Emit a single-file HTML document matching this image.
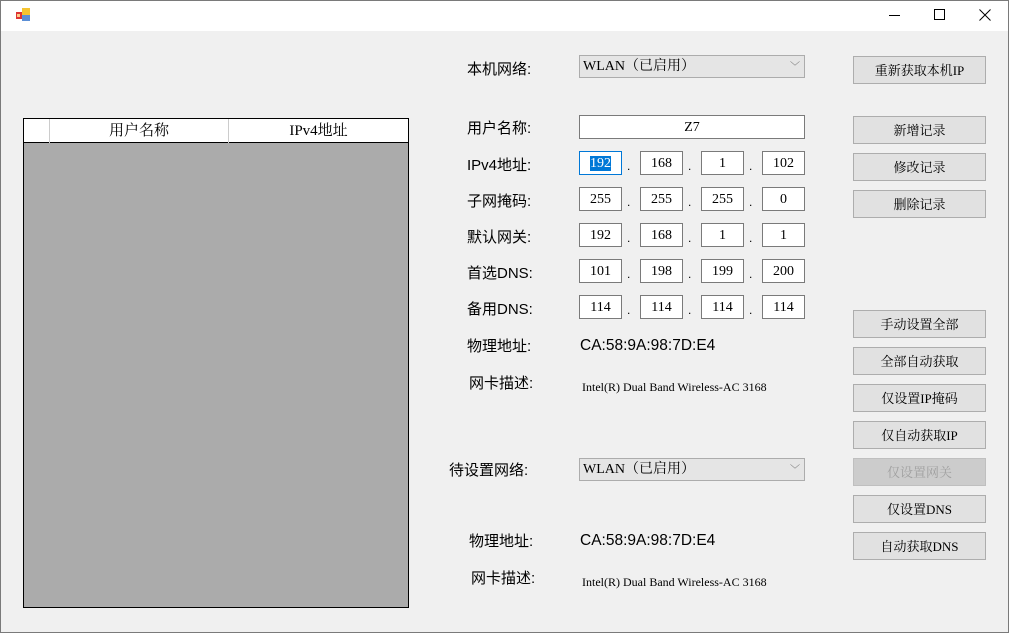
<!DOCTYPE html>
<html><head><meta charset="utf-8"><style>
*{margin:0;padding:0;box-sizing:border-box}
body{width:1016px;height:639px;background:#fff;position:relative;overflow:hidden;font-family:"Liberation Sans","Noto Sans CJK SC",sans-serif}
#win{position:absolute;left:0;top:0;width:1009px;height:633px;box-shadow:inset 0 0 0 1px #7a7a7a;background:#f0f0f0}
#title{position:absolute;left:1px;top:1px;width:1007px;height:30px;background:#fff}
.a{position:absolute}
.lbl{position:absolute;font-size:15px;color:#000;line-height:20px;white-space:nowrap}
.ser{font-family:"Liberation Serif","Noto Serif CJK SC",serif}
.box{position:absolute;background:#fff;border:1px solid #7a7a7a;font-family:"Liberation Serif","Noto Serif CJK SC",serif;font-size:14px;text-align:center;line-height:23px;height:24px}
.dot{position:absolute;font-size:12px;line-height:12px}
.btn{position:absolute;left:853px;width:133px;height:28px;background:#e1e1e1;border:1px solid #adadad;font-family:"Liberation Serif","Noto Serif CJK SC",serif;font-size:13px;text-align:center;line-height:27px;color:#000}
.dd{position:absolute;left:579px;width:226px;height:23px;background:#e5e5e5;border:1px solid #acacac;font-family:"Liberation Serif","Noto Serif CJK SC",serif;font-size:14px;line-height:22px;padding-left:3px}
.dd span{position:absolute;right:4px;top:1px;font-size:10px;color:#555}
</style></head><body>
<div id="win">
<div id="title">
 <svg class="a" style="left:15px;top:7px" width="16" height="14"><rect x="0" y="4" width="6" height="7" fill="#d33"/><rect x="1" y="6" width="3" height="3" fill="#fc8"/><rect x="6" y="0" width="8" height="7" fill="#f5c431"/><rect x="6" y="7" width="8" height="6" fill="#5b8fd6"/></svg>
 <div class="a" style="left:888px;top:14px;width:11px;height:1px;background:#000"></div>
 <div class="a" style="left:933px;top:8px;width:11px;height:11px;border:1px solid #000"></div>
 <svg class="a" style="left:978px;top:8px" width="12" height="12"><path d="M0.5 0.5L11.5 11.5M11.5 0.5L0.5 11.5" stroke="#000" stroke-width="1"/></svg>
</div>
<div class="a" style="left:23px;top:118px;width:386px;height:490px;border:1px solid #000;background:#ababab">
 <div class="a" style="left:0;top:0;width:384px;height:24px;background:#fff;border-bottom:1px solid #000"></div>
 <div class="a" style="left:25px;top:0;width:1px;height:24px;background:#ccc"></div>
 <div class="a" style="left:204px;top:0;width:1px;height:24px;background:#ccc"></div>
 <div class="lbl ser" style="left:26px;top:2px;width:178px;text-align:center;font-size:15px">用户名称</div>
 <div class="lbl ser" style="left:205px;top:2px;width:179px;text-align:center;font-size:15px">IPv4地址</div>
</div>
<div class="lbl" style="left:467px;top:60px">本机网络:</div>
<div class="lbl" style="left:467px;top:119px">用户名称:</div>
<div class="lbl" style="left:467px;top:156px">IPv4地址:</div>
<div class="lbl" style="left:467px;top:192px">子网掩码:</div>
<div class="lbl" style="left:467px;top:228px">默认网关:</div>
<div class="lbl" style="left:467px;top:264px">首选DNS:</div>
<div class="lbl" style="left:467px;top:300px">备用DNS:</div>
<div class="lbl" style="left:467px;top:337px">物理地址:</div>
<div class="lbl" style="left:469px;top:374px">网卡描述:</div>
<div class="lbl" style="left:580px;top:336px;font-size:15.5px">CA:58:9A:98:7D:E4</div>
<div class="lbl ser" style="left:582px;top:377px;font-size:12px">Intel(R) Dual Band Wireless-AC 3168</div>
<div class="lbl" style="left:449px;top:461px">待设置网络:</div>
<div class="lbl" style="left:469px;top:532px">物理地址:</div>
<div class="lbl" style="left:471px;top:569px">网卡描述:</div>
<div class="lbl" style="left:580px;top:531px;font-size:15.5px">CA:58:9A:98:7D:E4</div>
<div class="lbl ser" style="left:582px;top:572px;font-size:12px">Intel(R) Dual Band Wireless-AC 3168</div>
<div class="dd" style="top:55px">WLAN（已启用）<span>﹀</span></div>
<div class="dd" style="top:458px">WLAN（已启用）<span>﹀</span></div>
<div class="box" style="left:579px;top:115px;width:226px">Z7</div>
<div class="btn" style="top:56px">重新获取本机IP</div>
<div class="btn" style="top:116px">新增记录</div>
<div class="btn" style="top:153px">修改记录</div>
<div class="btn" style="top:190px">删除记录</div>
<div class="btn" style="top:310px">手动设置全部</div>
<div class="btn" style="top:347px">全部自动获取</div>
<div class="btn" style="top:384px">仅设置IP掩码</div>
<div class="btn" style="top:421px">仅自动获取IP</div>
<div class="btn" style="top:458px;background:#cccccc;border-color:#bfbfbf;color:#a0a0a0">仅设置网关</div>
<div class="btn" style="top:495px">仅设置DNS</div>
<div class="btn" style="top:532px">自动获取DNS</div>
<div class="box" style="left:579px;top:151px;width:43px;border-color:#0078d7"><span style="background:#0078d7;color:#fff">192</span></div>
<div class="box" style="left:640px;top:151px;width:43px">168</div>
<div class="box" style="left:701px;top:151px;width:43px">1</div>
<div class="box" style="left:762px;top:151px;width:43px">102</div>
<div class="box" style="left:579px;top:187px;width:43px">255</div>
<div class="box" style="left:640px;top:187px;width:43px">255</div>
<div class="box" style="left:701px;top:187px;width:43px">255</div>
<div class="box" style="left:762px;top:187px;width:43px">0</div>
<div class="box" style="left:579px;top:223px;width:43px">192</div>
<div class="box" style="left:640px;top:223px;width:43px">168</div>
<div class="box" style="left:701px;top:223px;width:43px">1</div>
<div class="box" style="left:762px;top:223px;width:43px">1</div>
<div class="box" style="left:579px;top:259px;width:43px">101</div>
<div class="box" style="left:640px;top:259px;width:43px">198</div>
<div class="box" style="left:701px;top:259px;width:43px">199</div>
<div class="box" style="left:762px;top:259px;width:43px">200</div>
<div class="box" style="left:579px;top:295px;width:43px">114</div>
<div class="box" style="left:640px;top:295px;width:43px">114</div>
<div class="box" style="left:701px;top:295px;width:43px">114</div>
<div class="box" style="left:762px;top:295px;width:43px">114</div>
<div class="dot" style="left:627px;top:160px">.</div><div class="dot" style="left:688px;top:160px">.</div><div class="dot" style="left:749px;top:160px">.</div>
<div class="dot" style="left:627px;top:196px">.</div><div class="dot" style="left:688px;top:196px">.</div><div class="dot" style="left:749px;top:196px">.</div>
<div class="dot" style="left:627px;top:232px">.</div><div class="dot" style="left:688px;top:232px">.</div><div class="dot" style="left:749px;top:232px">.</div>
<div class="dot" style="left:627px;top:268px">.</div><div class="dot" style="left:688px;top:268px">.</div><div class="dot" style="left:749px;top:268px">.</div>
<div class="dot" style="left:627px;top:304px">.</div><div class="dot" style="left:688px;top:304px">.</div><div class="dot" style="left:749px;top:304px">.</div>
</div>
</body></html>
